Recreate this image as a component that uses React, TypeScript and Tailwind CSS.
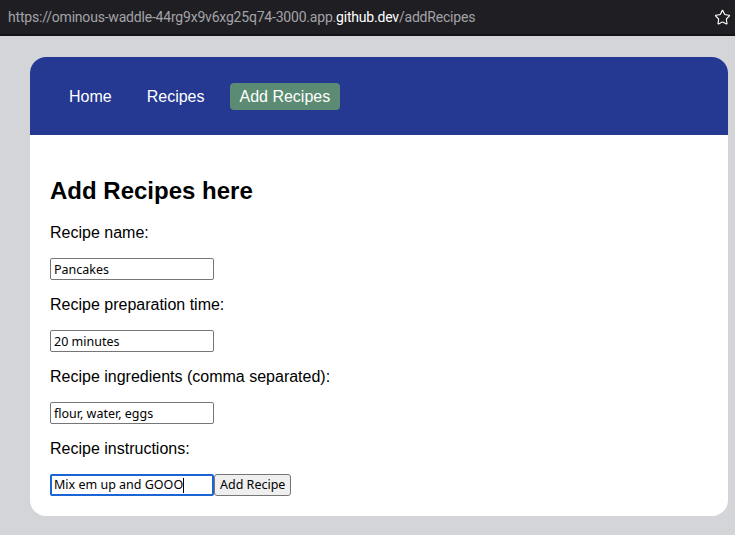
import { Star } from "lucide-react";

const fields = [
  { label: "Recipe name:", value: "Pancakes" },
  { label: "Recipe preparation time:", value: "20 minutes" },
  { label: "Recipe ingredients (comma separated):", value: "flour, water, eggs" },
];

export default function App() {
  return (
    <div className="w-[735px] h-[535px] bg-[#d4d5d9] overflow-hidden font-['Liberation_Sans',Arial,sans-serif]">
      {/* browser address bar */}
      <div className="h-[36px] bg-[#1f1f23] border-b-[2px] border-[#141416] flex items-center justify-between pl-[8px] pr-[4px]">
        <div className="text-[14px] text-[#a3a3a8] font-['Roboto',sans-serif] tracking-[-0.2px]">
          https://ominous-waddle-44rg9x9v6xg25q74-3000.app.
          <span className="text-white">github.dev</span>/addRecipes
        </div>
        <Star size={17} strokeWidth={1.6} className="text-white" />
      </div>

      <div className="ml-[30px] mt-[21px] w-[698px] rounded-[16px] overflow-hidden bg-white">
        <nav className="h-[78px] bg-[#253993] flex items-center gap-[15px] pl-[29px] text-[16px] text-white">
          <a className="px-[10px] leading-[27px]">Home</a>
          <a className="px-[10px] leading-[27px]">Recipes</a>
          <a className="px-[10px] leading-[27px] bg-[#5b8b72] rounded-[4px]">Add Recipes</a>
        </nav>

        <div className="pl-[20px] pt-[42px] pb-[20px] text-black">
          <h2 className="text-[24px] leading-[28px] font-bold">Add Recipes here</h2>
          <form className="flex flex-col">
            {fields.map((f, i) => (
              <div key={i} className="flex flex-col">
                <label className={`text-[16px] leading-[18px] ${i === 0 ? "mt-[19px]" : "mt-[16px]"}`}>
                  {f.label}
                </label>
                <input
                  readOnly
                  value={f.value}
                  className="mt-[16px] w-[164px] h-[22px] border border-[#767676] rounded-[2px] px-[3px] text-[12.5px] font-['Noto_Sans',sans-serif] text-black outline-none"
                />
              </div>
            ))}
            <label className="text-[16px] leading-[18px] mt-[16px]">Recipe instructions:</label>
            <div className="mt-[16px] flex items-center">
              <div className="w-[164px] h-[22px] border-[2px] border-[#1a64d6] rounded-[2px] pl-[2px] flex items-center text-[12.5px] font-['Noto_Sans',sans-serif]">
                Mix em up and GOOO
                <span className="w-px h-[15px] bg-black" />
              </div>
              <button
                type="button"
                className="h-[22px] px-[5px] bg-[#efefef] border border-[#767676] rounded-[3px] text-[12.5px] font-['Noto_Sans',sans-serif] text-black leading-none"
              >
                Add Recipe
              </button>
            </div>
          </form>
        </div>
      </div>
    </div>
  );
}
